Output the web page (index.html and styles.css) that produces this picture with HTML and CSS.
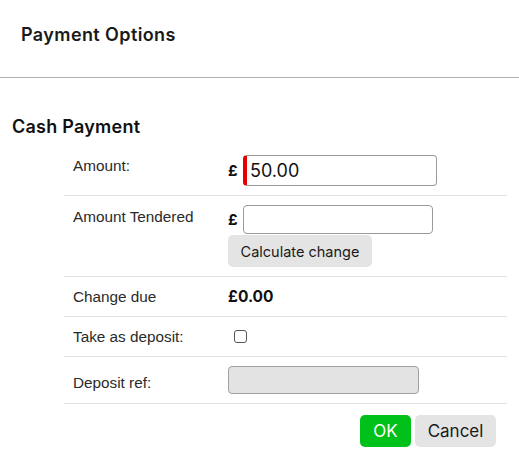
FILE: index.html
```html
<!DOCTYPE html>
<html>
<head>
<meta charset="utf-8">
<link rel="stylesheet" href="styles.css">
</head>
<body>
<div class="dialog">
  <div class="header"><h1 class="title">Payment Options</h1></div>
  <div class="content">
    <h2 class="section-title">Cash Payment</h2>
    <div class="form">
      <div class="row row-amount">
        <div class="label">Amount:</div>
        <div class="value">
          <span class="currency">£</span>
          <input class="input input-required" type="text" value="50.00">
        </div>
      </div>
      <div class="row row-tendered">
        <div class="label">Amount Tendered</div>
        <div class="value value-stack">
          <div class="inline">
            <span class="currency">£</span>
            <input class="input input-short" type="text" value="">
          </div>
          <button class="btn btn-grey btn-calc">Calculate change</button>
        </div>
      </div>
      <div class="row row-change">
        <div class="label">Change due</div>
        <div class="value"><span class="amount">£0.00</span></div>
      </div>
      <div class="row row-deposit">
        <div class="label">Take as deposit:</div>
        <div class="value"><input class="checkbox" type="checkbox"></div>
      </div>
      <div class="row row-ref">
        <div class="label">Deposit ref:</div>
        <div class="value"><input class="input input-disabled" type="text" disabled></div>
      </div>
    </div>
    <div class="actions">
      <button class="btn btn-ok">OK</button>
      <button class="btn btn-grey btn-cancel">Cancel</button>
    </div>
  </div>
</div>
</body>
</html>
```
FILE: styles.css
```css
html, body {
  margin: 0;
  padding: 0;
  background: #ffffff;
}
body {
  font-family: Inter, "Liberation Sans", sans-serif;
  color: #1a1a1a;
}
.dialog {
  width: 519px;
}
.header {
  height: 77px;
  border-bottom: 1px solid #b0b0b0;
  padding: 0 21px;
  box-sizing: content-box;
}
.title {
  margin: 0;
  padding-top: 24px;
  font-size: 18px;
  line-height: 22px;
  font-weight: 600;
  letter-spacing: 0.4px;
  color: #1a1a1a;
}
.content {
  padding: 0 12px;
}
.section-title {
  margin: 0;
  padding-top: 38px;
  font-size: 18px;
  line-height: 22px;
  font-weight: 600;
  letter-spacing: 0.25px;
  color: #111;
}
.form {
  margin-left: 52px;
  width: 443px;
  margin-top: 7px;
}
.row {
  display: grid;
  grid-template-columns: 164px 1fr;
  border-bottom: 1px solid #e2e2e2;
}
.label {
  padding-left: 9px;
  font-family: "Liberation Sans", Arial, sans-serif;
  font-size: 15.3px;
  color: #2a2a2a;
}
.value {
  display: flex;
  align-items: center;
}
.value-stack {
  flex-direction: column;
  align-items: flex-start;
}
.inline {
  display: flex;
  align-items: center;
}
.currency {
  font-weight: 700;
  font-size: 15px;
  width: 15px;
  color: #111;
}
.input {
  box-sizing: border-box;
  border: 1px solid #9a9a9a;
  border-radius: 4px;
  background: #fff;
  font-family: Inter, sans-serif;
  font-size: 18px;
  color: #111;
  padding: 0 4px;
  outline: none;
  margin: 0;
}
.row-amount {
  padding: 10px 0 9px;
}
.row-amount .label {
  padding-top: 2px;
}
.input-required {
  width: 194px;
  height: 31px;
  border-left: 4px solid #e60000;
  padding-left: 3px;
}
.row-tendered {
  padding: 9px 0 9px;
}
.row-tendered .label {
  padding-top: 3px;
}
.input-short {
  width: 190px;
  height: 29px;
}
.btn {
  border: none;
  border-radius: 5px;
  font-family: Inter, sans-serif;
  cursor: pointer;
  margin: 0;
}
.btn-grey {
  background: #e4e4e4;
  color: #1a1a1a;
}
.btn-calc {
  margin-top: 1px;
  height: 32px;
  width: 144px;
  font-size: 14.5px;
  padding: 0;
}
.row-change {
  height: 39px;
  align-items: center;
}
.amount {
  font-weight: 700;
  font-size: 15.5px;
  color: #111;
}
.row-deposit {
  height: 39px;
  align-items: center;
}
.checkbox {
  width: 13px;
  height: 13px;
  margin: 0 0 0 6px;
  appearance: none;
  -webkit-appearance: none;
  border: 1px solid #555;
  border-radius: 3px;
  background: #fff;
}
.row-ref {
  padding: 9px 0 9px;
}
.row-ref .label {
  padding-top: 8px;
}
.input-disabled {
  width: 191px;
  height: 28px;
  background: #e3e3e3;
  border-color: #a0a0a0;
}
.actions {
  display: flex;
  justify-content: flex-end;
  gap: 4px;
  width: 484px;
  margin-top: 11px;
}
.btn-ok {
  background: #00c01a;
  color: #fff;
  width: 51px;
  height: 32px;
  font-size: 17px;
}
.btn-cancel {
  width: 81px;
  height: 32px;
  font-size: 17px;
}
```
